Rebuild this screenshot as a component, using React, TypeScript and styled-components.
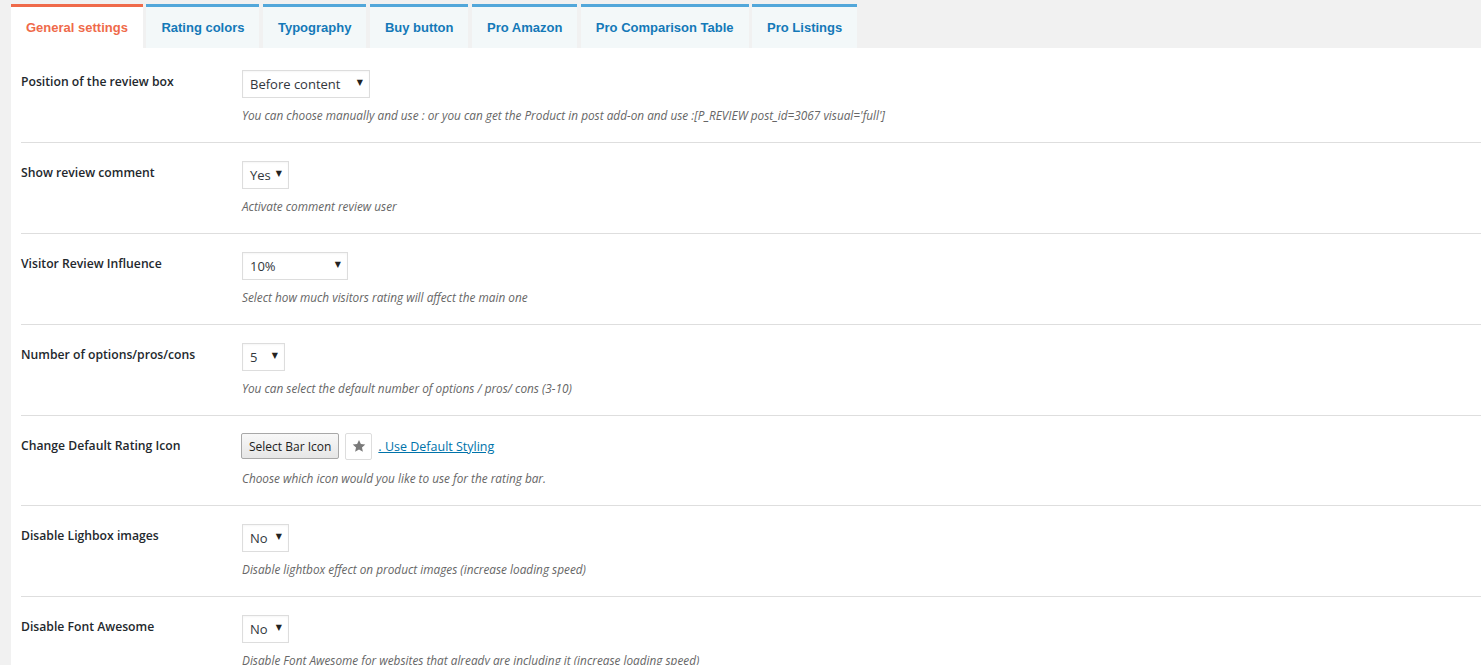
import React from 'react';
import styled, { createGlobalStyle } from 'styled-components';

const GlobalStyle = createGlobalStyle`
  html, body {
    margin: 0;
    padding: 0;
    background: #f1f1f1;
    font-family: "Open Sans", "Liberation Sans", Arial, sans-serif;
    color: #23282d;
    overflow: hidden;
  }
`;

interface ITab {
  title: string;
  active?: boolean;
}

const tabs: ITab[] = [
  { title: 'General settings', active: true },
  { title: 'Rating colors' },
  { title: 'Typography' },
  { title: 'Buy button' },
  { title: 'Pro Amazon' },
  { title: 'Pro Comparison Table' },
  { title: 'Pro Listings' },
];

interface IOption {
  label: string;
  value?: string;
  selectWidth?: number;
  description: string;
  iconPicker?: boolean;
}

const options: IOption[] = [
  {
    label: 'Position of the review box',
    value: 'Before content',
    selectWidth: 128,
    description: "You can choose manually and use : or you can get the Product in post add-on and use :[P_REVIEW post_id=3067 visual='full']",
  },
  { label: 'Show review comment', value: 'Yes', selectWidth: 47, description: 'Activate comment review user' },
  { label: 'Visitor Review Influence', value: '10%', selectWidth: 106, description: 'Select how much visitors rating will affect the main one' },
  { label: 'Number of options/pros/cons', value: '5', selectWidth: 43, description: 'You can select the default number of options / pros/ cons (3-10)' },
  { label: 'Change Default Rating Icon', iconPicker: true, description: 'Choose which icon would you like to use for the rating bar.' },
  { label: 'Disable Lighbox images', value: 'No', selectWidth: 47, description: 'Disable lightbox effect on product images (increase loading speed)' },
  { label: 'Disable Font Awesome', value: 'No', selectWidth: 47, description: 'Disable Font Awesome for websites that already are including it (increase loading speed)' },
];

function App(): JSX.Element {
  return (
    <>
      <GlobalStyle />
      <Page>
        <TabBar>
          {tabs.map((tab) => (
            <Tab key={tab.title} active={tab.active}>{tab.title}</Tab>
          ))}
        </TabBar>
        <Panel>
          {options.map((opt) => (
            <Row key={opt.label}>
              <Label>{opt.label}</Label>
              <Field>
                {opt.iconPicker ? (
                  <Controls>
                    <Button>Select Bar Icon</Button>
                    <IconBox>
                      <svg width="14" height="14" viewBox="0 0 24 24">
                        <path
                          d="M12 1.5l3.2 7 7.6.8-5.7 5.1 1.6 7.5L12 18.1l-6.7 3.8 1.6-7.5L1.2 9.3l7.6-.8z"
                          fill="#7a7a7a"
                        />
                      </svg>
                    </IconBox>
                    <Link href="#">. Use Default Styling</Link>
                  </Controls>
                ) : (
                  <Select w={opt.selectWidth || 60}>
                    <span>{opt.value}</span>
                    <Arrow>▼</Arrow>
                  </Select>
                )}
                <Description>{opt.description}</Description>
              </Field>
            </Row>
          ))}
        </Panel>
      </Page>
    </>
  );
}

export default App;

const Page = styled.div`
  display: flex;
  flex-direction: column;
  min-height: 665px;
  padding-left: 11px;
`;

const TabBar = styled.div`
  display: flex;
  align-items: flex-end;
  gap: 3.5px;
  height: 48px;
  padding-top: 4px;
  box-sizing: border-box;
`;

const Tab = styled.div<{ active?: boolean }>`
  height: 44px;
  box-sizing: border-box;
  display: flex;
  align-items: center;
  padding: 0 15px 1px;
  border-top: 3px solid ${({ active }) => (active ? '#ef6a4a' : '#52a7da')};
  background: ${({ active }) => (active ? '#ffffff' : '#f3f8f9')};
  color: ${({ active }) => (active ? '#ef6a4a' : '#1479b8')};
  font-family: "Liberation Sans", Arial, sans-serif;
  font-weight: 700;
  font-size: 13px;
  white-space: nowrap;
`;

const Panel = styled.div`
  background: #ffffff;
  padding: 4px 0 0 10px;
  flex: 1;
`;

const Row = styled.div`
  display: grid;
  grid-template-columns: 221px 1fr;
  padding: 18px 0 18px;
  border-bottom: 1px solid #dedede;
`;

const Label = styled.div`
  font-size: 12.2px;
  font-weight: 600;
  color: #23282d;
  line-height: 18px;
  padding-top: 3px;
`;

const Field = styled.div`
  display: flex;
  flex-direction: column;
  align-items: flex-start;
`;

const Select = styled.div<{ w: number }>`
  position: relative;
  width: ${({ w }) => w}px;
  height: 28px;
  box-sizing: border-box;
  display: flex;
  align-items: center;
  padding: 0 0 0 7px;
  border: 1px solid #dddddd;
  box-shadow: inset 0 1px 2px rgba(0, 0, 0, 0.04);
  background: #ffffff;
  font-size: 13px;
  color: #32373c;
`;

const Arrow = styled.span`
  position: absolute;
  right: 6px;
  top: 7px;
  font-size: 8px;
  color: #222;
  font-family: "DejaVu Sans", sans-serif;
`;

const Controls = styled.div`
  display: flex;
  align-items: center;
  gap: 6px;
  height: 28px;
  margin: -2px 0 1px -1px;
`;

const Button = styled.button`
  height: 26px;
  padding: 0 7px;
  border: 1px solid #a8a8a8;
  border-radius: 2px;
  background: linear-gradient(#f8f8f8, #e6e6e6);
  font-family: "Open Sans", "Liberation Sans", Arial, sans-serif;
  font-size: 12px;
  color: #222;
`;

const IconBox = styled.div`
  width: 27px;
  height: 27px;
  box-sizing: border-box;
  border: 1px solid #dddddd;
  border-radius: 2px;
  display: flex;
  align-items: center;
  justify-content: center;
`;

const Link = styled.a`
  color: #0073aa;
  font-size: 12.5px;
  text-decoration: underline;
`;

const Description = styled.p`
  margin: 9px 0 0;
  font-size: 11.8px;
  line-height: 17px;
  font-style: italic;
  color: #666666;
`;
